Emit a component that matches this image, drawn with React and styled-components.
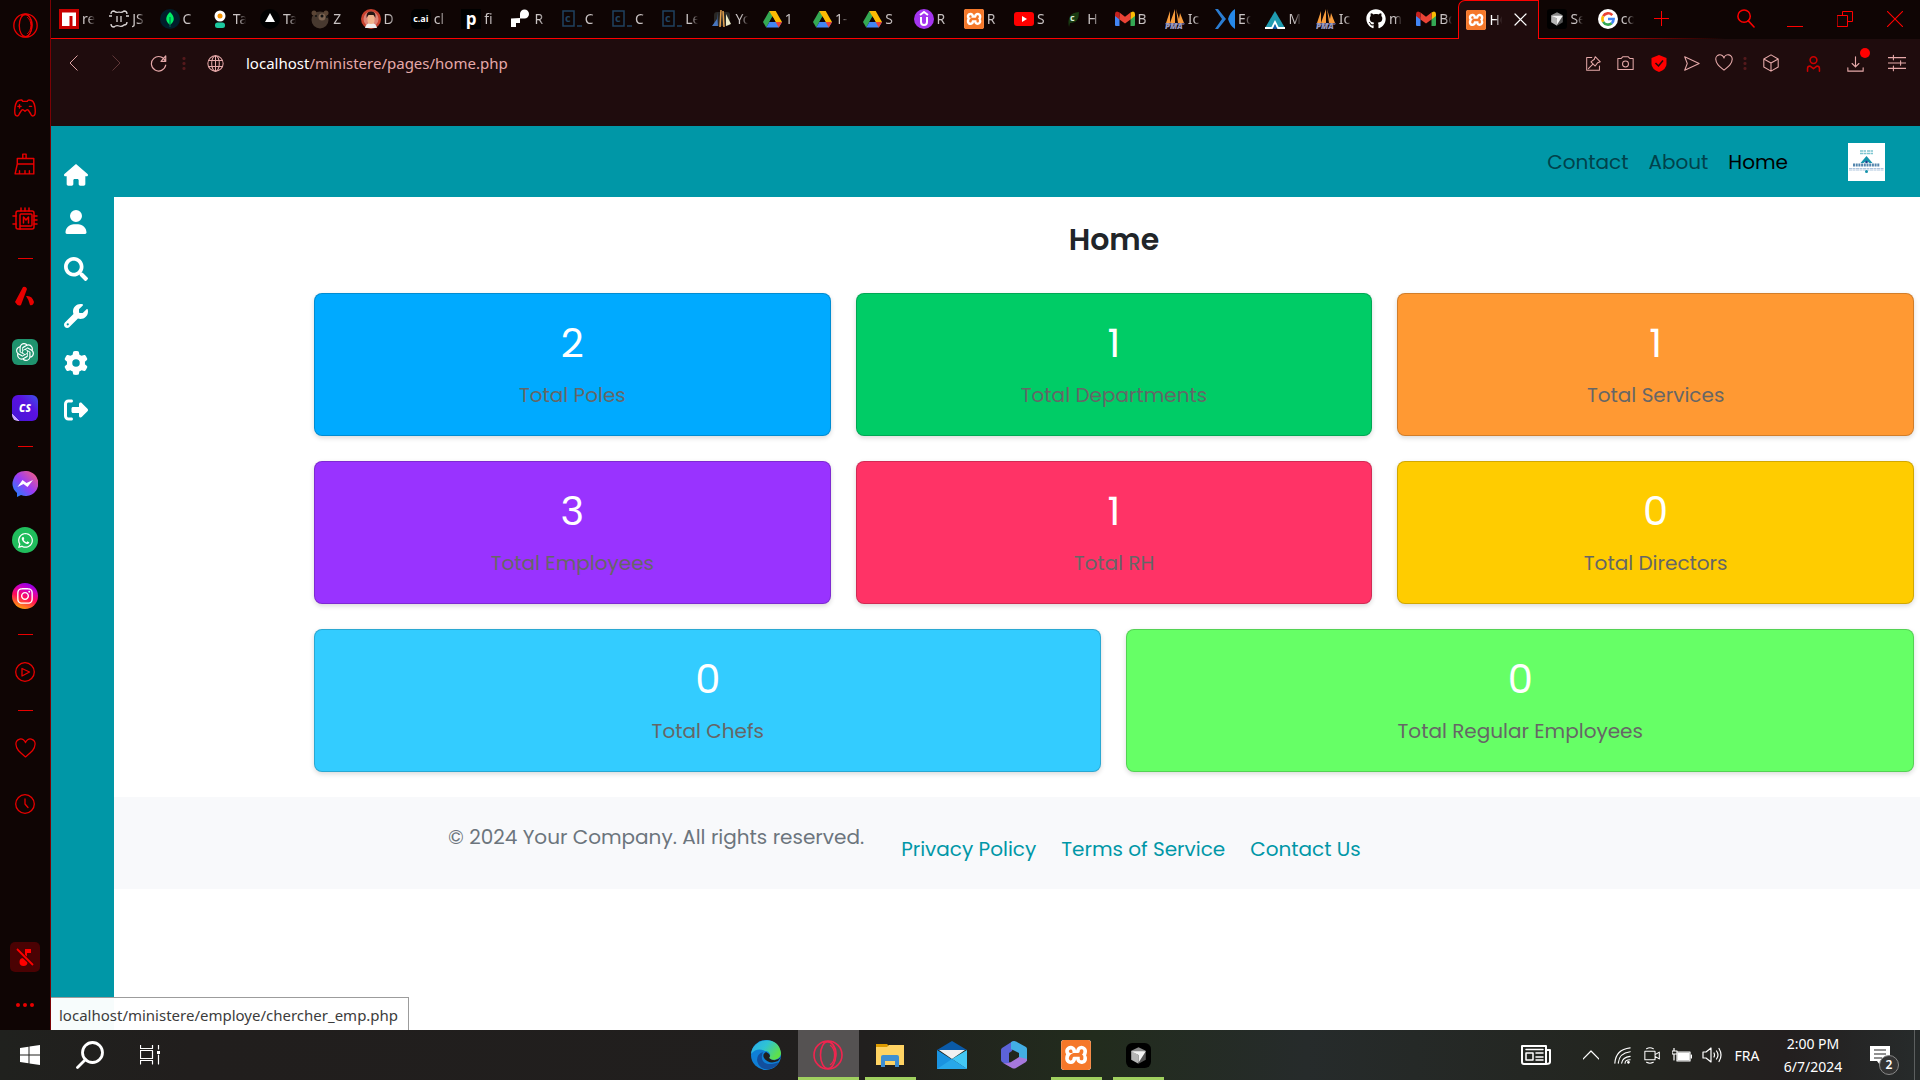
import React from 'react';
import styled, { createGlobalStyle } from 'styled-components';
import {
  FaHouse, FaUser, FaWrench, FaGear, FaRightFromBracket,
  FaWhatsapp, FaInstagram, FaGithub,
} from 'react-icons/fa6';
import { FaSearch } from 'react-icons/fa';
import { SiXampp, SiOpenai } from 'react-icons/si';

const RED = '#ff0000';
const RAIL = '#e80000';
const TEAL = '#0097a7';
const PINK = '#e6a9a9';

const GlobalStyle = createGlobalStyle`
  * { box-sizing: border-box; }
  body { margin: 0; background: #fff; }
  button { border: 0; padding: 0; background: none; color: inherit; font: inherit; cursor: pointer; }
  a { text-decoration: none; color: inherit; }
  svg { display: block; }
  h1, p { margin: 0; }
`;

const Screen = styled.div`
  display: flex;
  flex-direction: column;
  min-height: 100vh;
  font-family: "Noto Sans", "Open Sans", sans-serif;
`;
const Browser = styled.div`display: flex; flex: 1;`;

const Rail = styled.aside`
  display: flex;
  flex-direction: column;
  align-items: center;
  width: 51px;
  flex: none;
  background: #0f0504;
  color: ${RAIL};
  border-right: 1px solid #7a0205;
`;
const RailButton = styled.button`
  display: grid;
  place-items: center;
  width: 50px;
  height: ${(p) => p.$h || 56}px;
`;
const RailRule = styled.hr`
  width: 15px;
  height: 1px;
  margin: 10px 0 9px;
  border: 0;
  background: ${RAIL};
`;
const RailGap = styled.div`flex: ${(p) => (p.$grow ? 1 : 'none')}; height: 30px;`;
const Muted = styled.span`
  display: grid;
  place-items: center;
  width: 30px;
  height: 30px;
  border-radius: 5px;
  background: #4a0203;
`;
const AppBadge = styled.span`
  display: grid;
  place-items: center;
  width: 26px;
  height: 26px;
  border-radius: ${(p) => (p.$round ? '13px' : '6px')};
  background: ${(p) => p.$bg};
  color: #fff;
  font: italic 800 10px "Open Sans", sans-serif;
`;

const Window = styled.div`display: flex; flex-direction: column; flex: 1; min-width: 0;`;

const TabBar = styled.header`
  display: flex;
  height: 39px;
  background:
    linear-gradient(90deg, ${RED} calc(100% - 355px), #0f0504 calc(100% - 195px)) bottom / 100% 1px no-repeat,
    #0f0504;
`;
const Tabs = styled.div`display: flex; flex: 1; min-width: 0;`;
const Tab = styled.button`
  display: flex;
  align-items: center;
  gap: 3px;
  flex: ${(p) => (p.$active ? 'none' : '1 1 0')};
  width: ${(p) => (p.$active ? '81px' : 'auto')};
  min-width: 0;
  height: 39px;
  padding: 0 0 1px ${(p) => (p.$active ? 7 : 8)}px;
  color: ${(p) => (p.$active ? '#fff' : '#c9c3c3')};
  background: ${(p) => (p.$active ? '#1f0c0d' : 'none')};
  border: solid ${RED};
  border-width: ${(p) => (p.$active ? '1px 1px 0' : '0')};
  border-radius: ${(p) => (p.$active ? '7px 0 0 0' : '0')};
`;
const TabTitle = styled.span`
  flex: none;
  white-space: nowrap;
  font-size: 14px;
  line-height: 20px;
  mask-image: linear-gradient(90deg, #000 6px, transparent 13px);
`;
const Favicon = styled.span`
  display: grid;
  place-items: center;
  flex: none;
  width: ${(p) => p.$box || 20}px;
  height: ${(p) => p.$box || 20}px;
  border-radius: ${(p) => p.$r || 0}px;
  background: ${(p) => p.$bg || 'none'};
  color: ${(p) => p.$fg || '#fff'};
  font: 700 ${(p) => p.$size || 12}px/20px "Open Sans", sans-serif;
`;
const WindowControls = styled.div`
  display: flex;
  width: 280px;
  flex: none;
  color: ${RED};
  justify-content: space-between;
`;
const Controls = styled.div`display: flex;`;
const ControlButton = styled.button`display: grid; place-items: center; width: ${(p) => p.$w || 50}px; height: 37px;`;

const Toolbar = styled.div`
  background: #1f0c0d;
  color: ${PINK};
  padding-bottom: 39px;
`;
const AddressRow = styled.div`display: flex; align-items: center; height: 48px; padding: 0 2px;`;
const ToolButton = styled.button`
  display: grid;
  place-items: center;
  position: relative;
  width: ${(p) => p.$w || 42}px;
  height: 42px;
  color: ${(p) => p.$fg || 'inherit'};
`;
const Dots = styled.span`
  width: 10px;
  height: 13px;
  background: radial-gradient(circle, #55191b 1px, transparent 2px) center / 10px 5px;
`;
const UrlBox = styled.a`
  flex: 1;
  padding-left: 5px;
  font-size: 15px;
  line-height: 24px;
  b { color: #fff; font-weight: 400; }
`;
const Alert = styled.span`
  position: absolute;
  top: 6px;
  right: 6px;
  width: 10px;
  height: 10px;
  border-radius: 5px;
  background: ${RED};
`;

const Page = styled.div`
  position: relative;
  display: flex;
  flex: 1;
  background: #fff;
  font-family: Poppins, Inter, sans-serif;
`;
const SideNav = styled.nav`
  display: flex;
  flex-direction: column;
  flex: none;
  width: 63px;
  padding-top: 25px;
  background: ${TEAL};
  color: #fff;
`;
const SideLink = styled.a`
  display: grid;
  place-items: center;
  width: 50px;
  height: 47px;
  svg { width: auto; height: 24px; }
`;
const Content = styled.div`flex: 1; min-width: 0;`;
const TopNav = styled.nav`
  display: flex;
  align-items: center;
  justify-content: flex-end;
  gap: 20px;
  height: 71px;
  padding-right: 35px;
  background: ${TEAL};
`;
const TopLink = styled.a`
  font-size: 20px;
  line-height: 30px;
  color: ${(p) => (p.$active ? '#000' : '#00424b')};
`;
const Logo = styled.a`margin-left: 40px; background: #fff;`;

const Main = styled.main`padding: 25px 6px 25px 200px;`;
const Title = styled.h1`
  margin-bottom: 35px;
  text-align: center;
  font-size: 30px;
  line-height: 36px;
  font-weight: 600;
  color: #212529;
`;
const Cards = styled.section`display: grid; grid-template-columns: repeat(6, 1fr); gap: 25px;`;
const Card = styled.article`
  grid-column: span ${(p) => p.$span};
  padding: 25px;
  text-align: center;
  background: ${(p) => p.$bg};
  border: 1px solid rgba(0, 0, 0, 0.175);
  border-radius: 8px;
  box-shadow: 0 2px 5px rgba(0, 0, 0, 0.15);
`;
const Count = styled.p`margin-bottom: 13px; font-size: 40px; line-height: 48px; color: #fff;`;
const CardLabel = styled.p`font-size: 20px; line-height: 30px; color: #666;`;

const Footer = styled.footer`
  display: flex;
  gap: 37px;
  padding: 25px 0 25px 334px;
  background: #f8f9fb;
  font-size: 20px;
  line-height: 30px;
  color: #6c757d;
`;
const FooterLinks = styled.div`display: flex; gap: 25px; padding-top: 12px; color: ${TEAL};`;

const Status = styled.div`
  position: absolute;
  left: 0;
  bottom: 0;
  padding: 3px 10px 1px 8px;
  border: 1px solid #9c9c9c;
  border-width: 1px 1px 0 0;
  background: rgba(255, 255, 255, 0.97);
  color: #3c3c3c;
  font: 15px/28px "Noto Sans", "Open Sans", sans-serif;
`;

const Taskbar = styled.footer`
  display: grid;
  grid-template-columns: 1fr auto 1fr;
  height: 50px;
  background: linear-gradient(90deg, #20211e 0, #211e1d 10%, #211f1e 45%, #222c1d 57%, #262b2b 68%, #23251f 85%, #231f1f 93%, #272b2b 100%);
  color: #fff;
`;
const TaskGroup = styled.div`display: flex; align-items: center; justify-content: ${(p) => (p.$end ? 'flex-end' : 'flex-start')};`;
const TaskButton = styled.button`
  display: grid;
  place-items: center;
  width: ${(p) => p.$w || 60}px;
  height: 50px;
  background:
    linear-gradient(${(p) => (p.$running ? '#a0d05f, #a0d05f' : 'transparent, transparent')}) bottom / ${(p) => (p.$active ? '100%' : '51px')} 3px no-repeat,
    ${(p) => (p.$active ? '#555252' : 'transparent')};
`;
const AppGroup = styled.div`display: flex; gap: 1px; margin-right: 16px;`;
const Clock = styled.time`
  width: 92px;
  text-align: center;
  font-size: 14px;
  line-height: 23px;
  white-space: pre-line;
`;
const Language = styled.button`width: 40px; font-size: 14px;`;
const Notices = styled.button`
  position: relative;
  width: 56px;
  height: 50px;
  margin-right: 5px;
  padding-left: 11px;
  border-right: 1px solid #5c5f5f;
`;
const NoticeCount = styled.span`
  position: absolute;
  right: 15px;
  bottom: 5px;
  width: 20px;
  height: 20px;
  border: 1px solid #888;
  border-radius: 10px;
  background: #343434;
  font-size: 12px;
  line-height: 18px;
  font-weight: 600;
`;

const Line = ({ w = 20, h, vb = '0 0 20 20', sw = 1.2, children }) => (
  <svg width={w} height={h || w} viewBox={vb} fill="none" stroke="currentColor" strokeWidth={sw} strokeLinejoin="round" strokeLinecap="round" aria-hidden="true">{children}</svg>
);

const OperaIcon = ({ size = 26, color = 'currentColor' }) => (
  <svg width={size} height={size} viewBox="0 0 30 30" fill="none" stroke={color} strokeWidth="1.6" aria-hidden="true">
    <circle cx="15" cy="15" r="14" />
    <ellipse cx="15" cy="15" rx="7.5" ry="13.5" />
    <path d="M10 3C19-1 24 8 23 16c-.5 6-3 10-6 12M17 5c6 4 6 16 0 20" strokeWidth="1.2" />
  </svg>
);
const Gmail = () => (
  <svg width="20" height="16" viewBox="0 0 20 16" aria-hidden="true">
    <path d="M0 3v11q0 1 1 1h3.500V6z" fill="#4285f4" /><path d="M20 3v11q0 1-1 1h-3.500V6z" fill="#34a853" />
    <path d="M15.500 1.500 18 .5q2 0 2 2.500v2l-4.500 3.500z" fill="#fbbc04" />
    <path d="M4.500 1.500 10 5.800l5.500-4.300v7L10 12.500 4.500 8.500z" fill="#ea4335" /><path d="M4.500 1.500 2 .5Q0 .5 0 3v2l4.500 3.500z" fill="#c5221f" />
  </svg>
);
const Drive = () => (
  <svg width="19" height="17" viewBox="0 0 19 17" aria-hidden="true">
    <path d="M6.300 0h6.400l-9.500 16.500L0 11z" fill="#34a853" /><path d="M6.300 0h6.400L19 11h-6.400z" fill="#fbbc04" />
    <path d="M3.200 16.500 6.400 11H19l-3.200 5.500z" fill="#4285f4" /><path d="M12.600 11H19l-3.200 5.500z" fill="#ea4335" />
    <path d="M9.500 5.600 12.600 11H6.400z" fill="#0f0504" />
  </svg>
);
const Xampp = ({ size = 20 }) => (
  <Favicon $bg="#fff" $fg="#f5782a" $r={3} $box={size}><SiXampp size={size} /></Favicon>
);
const Cube = ({ size = 20, pad = 4 }) => (
  <svg width={size} height={size} viewBox="0 0 24 24" aria-hidden="true">
    <rect width="24" height="24" rx={pad} fill="#000" />
    <path d="m12 4 7 3.500-7 3.500-7-3.500z" fill="#888" /><path d="m5 7.500 7 4V20l-7-4z" fill="#b5b5b5" /><path d="m12 11 7-3.500V16l-7 4z" fill="#555" />
    <path d="M5 8h14l-7 11v-7.500z" fill="#f3f3f3" />
  </svg>
);
const Sails = () => (
  <svg width="20" height="20" viewBox="0 0 20 20" aria-hidden="true">
    <path d="M5 2 1 14h4zM10 0 5 14h5zM11 0l2 14h6L15 4l-1 6z" fill="#f89c3c" />
    <path d="M0 14h20l-1 2H1z" fill="#53527a" />
    <text x="0" y="20" fontSize="8" fontWeight="800" fontStyle="italic" fontFamily="Open Sans, sans-serif" fill="#9a9ac0">PMA</text>
  </svg>
);
const Arrowhead = () => (
  <svg width="20" height="20" viewBox="0 0 20 20" aria-hidden="true">
    <path d="M10 2 20 19H0z" fill="#1f9bb0" /><path d="M0 19h7l3-6 3 6h7" stroke="#fff" strokeWidth="1.800" fill="none" /><path d="m10 15 2 5H8z" fill="#1558a8" />
  </svg>
);
const Draw = ({ children }) => <svg width="20" height="20" viewBox="0 0 20 20" aria-hidden="true">{children}</svg>;

const Npm = () => <Draw><path fill="#c80000" d="M0 0h20v20H0z" /><path fill="#fff" d="M3 3.500h14V17h-3.500V7h-3v10H3z" /></Draw>;
const JsonBox = () => (
  <Draw><path d="M2 5q0-3 3-3 2 2 5 1 3 1 5-1 3 0 3 3M2 15q0 3 3 3 2-2 5-1 3 1 5-1 3 0 3-3M0 7h3M17 7h3M8 7v6M12 7v6" stroke="#d9d4d4" strokeWidth="1.300" fill="none" /></Draw>
);
const Leaf = () => <Draw><circle cx="10" cy="10" r="10" fill="#001e2b" /><path d="M10 3c5 5 5 9 0 13-5-4-5-8 0-13z" fill="#00ed64" /><path d="M10 8v10" stroke="#00684a" /></Draw>;
const Person = () => <Draw><circle cx="10" cy="7" r="5.500" fill="#fff" /><circle cx="10" cy="7" r="2.500" fill="#f59300" /><rect x="5" y="13.500" width="10" height="5.500" rx="2.500" fill="#1bc9a0" /></Draw>;
const Triangle = () => <Draw><circle cx="10" cy="10" r="10" fill="#000" /><path d="m10 4 5 9H5z" fill="#fff" /></Draw>;
const Bear = () => <Draw><circle cx="10" cy="11" r="8.500" fill="#48392f" /><circle cx="4" cy="4" r="2.500" fill="#5b4535" /><circle cx="16" cy="4" r="2.500" fill="#5b4535" /><circle cx="12" cy="8" r="3.500" fill="#7d6553" /><circle cx="12" cy="7" r="1.500" fill="#111" /><circle cx="6" cy="7" r="1" fill="#111" /><circle cx="17" cy="8" r="1" fill="#111" /></Draw>;
const Face = () => <Draw><circle cx="10" cy="10" r="10" fill="#c8422f" /><circle cx="10" cy="10" r="7.500" fill="#fff" opacity=".35" /><path d="M4 19q1-5 6-5t6 5z" fill="#eee" /><rect x="6.500" y="5" width="7" height="10" rx="3.500" fill="#f0b48d" /><path d="M5.500 9Q5 2 10 2.500 15 2 14.500 9l-2-3h-5z" fill="#241511" /></Draw>;
const Render = () => <Draw><path d="M9 9V5a4.500 4.500 0 1 1 4.500 4.500H9v4.500H5V18H0V9.500z" fill="#fff" /></Draw>;
const Codecademy = () => (
  <Draw><rect x="1" y="2" width="11" height="15" fill="none" stroke="#20425f" strokeWidth="1.500" /><path d="M15 17h5" stroke="#20425f" strokeWidth="1.500" /><text x="3" y="13" fontSize="11" fontWeight="700" fontFamily="Open Sans, sans-serif" fill="#20425f">c</text></Draw>
);
const Ship = () => <Draw><rect x="2" y="3" width="16" height="14" rx="3" fill="#292724" /><path d="M5 3v7l-5 7h6z" fill="#4875bd" /><path d="M9 1 8 18M11 2l1 16" stroke="#e3a04d" strokeWidth="1.500" /><path d="m14 5 5 10-5 2z" fill="#ecebc8" /></Draw>;
const Udemy = () => <Draw><circle cx="10" cy="10" r="10" fill="#a435f0" /><path d="m6 6 4-3 4 3M7 8v5q0 3 3 3t3-3V8" fill="none" stroke="#fff" strokeWidth="2" /></Draw>;
const YouTube = () => <Draw><rect y="3" width="20" height="14" rx="3" fill="red" /><path d="m8 7 5 3-5 3z" fill="#fff" /></Draw>;
const Plant = () => <Draw><path d="M5 18Q2 4 15 3q0 12-9 11" fill="#193c12" /><text x="6" y="12" fontSize="9" fontWeight="700" fontFamily="Open Sans, sans-serif" fill="#dff0d8">c</text></Draw>;
const Edx = () => <Draw><path d="M0 0h3l8 10-8 10H0l7-10z" fill="#2b7dd2" /><path d="M20 0v20q-5-3-7-10 2-7 7-10z" fill="#2688e8" /></Draw>;
const Google = () => (
  <Draw><circle cx="10" cy="10" r="10" fill="#fff" />
    <g fill="none" strokeWidth="2.600"><path d="M14.300 6.200A5.600 5.600 0 0 0 5.200 7.200" stroke="#ea4335" /><path d="M5.200 7.200a5.600 5.600 0 0 0 0 5.600" stroke="#fbbc04" /><path d="M5.200 12.800a5.600 5.600 0 0 0 8.500 1.400" stroke="#34a853" /><path d="M13.700 14.200Q15.600 12.500 15.600 10H10" stroke="#4285f4" /></g>
  </Draw>
);

const TABS = [
  [<Npm />, 're'], [<JsonBox />, 'JS'], [<Leaf />, 'C'], [<Person />, 'Ta'], [<Triangle />, 'Ta'], [<Bear />, 'Z'], [<Face />, 'D'],
  [<Favicon $bg="#000" $r={5} $size={9}>c.ai</Favicon>, 'cl'], [<Favicon $bg="#000" $size={17}>p</Favicon>, 'fi'], [<Render />, 'R'],
  [<Codecademy />, 'C'], [<Codecademy />, 'C'], [<Codecademy />, 'Le'], [<Ship />, 'Yo'], [<Drive />, '1'], [<Drive />, '1-'], [<Drive />, 'S'],
  [<Udemy />, 'R'], [<Xampp />, 'R'], [<YouTube />, 'S'], [<Plant />, 'H'], [<Gmail />, 'B'], [<Sails />, 'Ic'], [<Edx />, 'Ed'],
  [<Arrowhead />, 'M'], [<Sails />, 'Ic'], [<FaGithub size={20} color="#fff" />, 'm'], [<Gmail />, 'Bo'],
];

const SIDE = [
  ['Home', FaHouse], ['Profile', FaUser], ['Search', FaSearch], ['Tools', FaWrench], ['Settings', FaGear], ['Log out', FaRightFromBracket],
];

const CARDS = [
  ['2', 'Total Poles', '#00aaff', 2], ['1', 'Total Departments', '#00cc66', 2], ['1', 'Total Services', '#ff9933', 2],
  ['3', 'Total Employees', '#9933ff', 2], ['1', 'Total RH', '#ff3366', 2], ['0', 'Total Directors', '#ffcc00', 2],
  ['0', 'Total Chefs', '#33ccff', 3], ['0', 'Total Regular Employees', '#66ff66', 3],
];

const Heart = ({ w = 20 }) => <Line w={w}><path d="M10 18C4 13 1 10.500 1 6.500A4.500 4.500 0 0 1 10 4.500 4.500 4.500 0 0 1 19 6.500C19 10.500 16 13 10 18z" /></Line>;

function OperaRail() {
  return (
    <Rail aria-label="Browser sidebar">
      <RailButton $h={50} aria-label="Opera menu"><OperaIcon size={25} /></RailButton>
      <RailGap />
      <RailButton aria-label="GX corner"><Line w={22} sw={1.3}><path d="M5 3q2-1 3 1h4q1-2 3-1 3 0 4 6 1 7-1 8-2 1-3-2l-2-3q-1-1-3 1-2-2-3-1l-2 3q-1 3-3 2-2-1-1-8 1-6 4-6zM5 7v3M3.500 8.500h3M14 8.500h2" /></Line></RailButton>
      <RailButton aria-label="Cleaner"><Line w={22} sw={1.3}><path d="M8 5V1h3v4M3 5h15v5H3zM3 10 1 19h17V10M5 19v-3M10 19v-3M14 19v-3" /></Line></RailButton>
      <RailButton aria-label="GX control"><Line w={26} vb="0 0 26 26" sw={1.5}><rect x="4" y="4" width="18" height="18" rx="2" /><rect x="8" y="7" width="12" height="12" rx="1" /><path d="M11.500 16v-6l2.500 3 2.500-3v6M9 4V1M13 4V1M17 4V1M22 9h3M22 13h3M22 17h3M4 9H1M4 17H1M8 19v3" /></Line></RailButton>
      <RailRule />
      <RailButton aria-label="Aria"><svg width="20" height="20" viewBox="0 0 20 20" fill="currentColor"><path d="M8 1q3-1 4 2L6 19q-3 2-6-3zM11 10q6-1 8 6-1 4-4 3-1-5-4-9z" /></svg></RailButton>
      <RailButton aria-label="ChatGPT"><AppBadge $bg="#1f936e"><SiOpenai size={18} /></AppBadge></RailButton>
      <RailButton aria-label="ChatSonic"><AppBadge $bg="linear-gradient(45deg,#c9a6ff 14%,#4a16d8 15%,#5a10e0 60%,#3d55e8)">CS</AppBadge></RailButton>
      <RailRule />
      <RailButton aria-label="Messenger">
        <svg width="26" height="26" viewBox="0 0 26 26">
          <defs><linearGradient id="msg" x1="0" y1="1" x2="1" y2="0"><stop offset="0" stopColor="#0a8cff" /><stop offset=".5" stopColor="#9b3bf5" /><stop offset="1" stopColor="#ff6470" /></linearGradient></defs>
          <path d="M13 0a12.500 12.500 0 1 1-4 24l-4 2v-4A12.500 12.500 0 0 1 13 0z" fill="url(#msg)" />
          <path d="m5.500 16 5-7 4 3 6.500-3-5.500 7-4-3z" fill="#fff" />
        </svg>
      </RailButton>
      <RailButton aria-label="WhatsApp"><AppBadge $round $bg="#20bd5c"><FaWhatsapp size={17} /></AppBadge></RailButton>
      <RailButton aria-label="Instagram"><AppBadge $round $bg="linear-gradient(20deg,#ffb400 5%,#ff0a5a 45%,#d000c0 70%,#6a00ff)"><FaInstagram size={18} /></AppBadge></RailButton>
      <RailRule />
      <RailButton aria-label="Player"><Line sw={1.3}><circle cx="10" cy="10" r="9.300" /><path d="M7 6.500 14.500 10 7 14z" /></Line></RailButton>
      <RailRule />
      <RailButton aria-label="Pinboards"><Heart w={21} /></RailButton>
      <RailButton aria-label="History"><Line sw={1.3}><circle cx="10" cy="10" r="9.300" /><path d="M10 5v5l3 3.500" /></Line></RailButton>
      <RailGap $grow />
      <RailButton $h={46} aria-label="Background music"><Muted><svg width="18" height="18" viewBox="0 0 18 18" fill={RED}><path d="M9 1h6v4h-4v9H9z" /><circle cx="7.500" cy="14" r="4" /><path d="m1 2 16 15" stroke="#4a0203" strokeWidth="4" /><path d="m1 1 16 16" stroke={RED} strokeWidth="1.800" /></svg></Muted></RailButton>
      <RailButton $h={50} aria-label="Sidebar setup"><svg width="18" height="4" viewBox="0 0 18 4" fill="currentColor"><circle cx="2" cy="2" r="2" /><circle cx="9" cy="2" r="2" /><circle cx="16" cy="2" r="2" /></svg></RailButton>
    </Rail>
  );
}

function BrowserChrome() {
  return (
    <>
      <TabBar>
        <Tabs>
          {TABS.map(([icon, title], i) => <Tab key={i}>{icon}<TabTitle>{title}</TabTitle></Tab>)}
          <Tab $active><Xampp /><TabTitle>HO</TabTitle><Line w={13} vb="0 0 13 13"><path d="m1 1 11 11M12 1 1 12" /></Line></Tab>
          <Tab><Cube /><TabTitle>Se</TabTitle></Tab>
          <Tab><Google /><TabTitle>co</TabTitle></Tab>
        </Tabs>
        <WindowControls>
          <ControlButton $w={42} aria-label="New tab"><Line w={15} vb="0 0 15 15" sw={1}><path d="M7.500 0v15M0 7.500h15" /></Line></ControlButton>
          <Controls>
            <ControlButton aria-label="Search tabs"><Line w={19} sw={1.6}><circle cx="8.500" cy="7.500" r="6.500" /><path d="m13 12.500 6 6.500" /></Line></ControlButton>
            <ControlButton aria-label="Minimize"><Line w={16} vb="0 0 16 16" sw={1}><path d="M0 15.500h16" /></Line></ControlButton>
            <ControlButton aria-label="Restore"><Line w={16} vb="0 0 16 16" sw={1}><path d="M.5 4.500h10v11H.5zM5.500 4.500v-4h10v10h-5" /></Line></ControlButton>
            <ControlButton aria-label="Close"><Line w={16} vb="0 0 16 16" sw={1.1}><path d="m0 0 16 16M16 0 0 16" /></Line></ControlButton>
          </Controls>
        </WindowControls>
      </TabBar>
      <Toolbar>
        <AddressRow>
          <ToolButton aria-label="Back"><Line w={16}><path d="M14 1 5 10l9 9" /></Line></ToolButton>
          <ToolButton $fg="#62393b" aria-label="Forward"><Line w={16}><path d="m6 1 9 9-9 9" /></Line></ToolButton>
          <ToolButton aria-label="Reload"><Line w={17} sw={1.4}><path d="M18 7A8.500 8.500 0 1 0 18.500 12M18.500 1v6.500H13z" /></Line></ToolButton>
          <Dots />
          <ToolButton $w={52} aria-label="Site information"><Line w={17}><circle cx="10" cy="10" r="9" /><ellipse cx="10" cy="10" rx="4.500" ry="9" /><path d="M10 1v18M2 6.500h16M2 13.500h16" /></Line></ToolButton>
          <UrlBox href="#"><b>localhost</b>/ministere/pages/home.php</UrlBox>
          <ToolButton $w={32} aria-label="Pin"><Line w={17}><path d="M8 3H2v15h15v-5M12 2l6 6-3 1-3 4-5-5 4-3zM9 11l-5 5" /></Line></ToolButton>
          <ToolButton $w={33} aria-label="Snapshot"><Line w={17}><path d="M1 4h4l2-2h6l2 2h4v13H1z" /><circle cx="10" cy="10.500" r="3.500" /></Line></ToolButton>
          <ToolButton $w={33} aria-label="Shield"><svg width="16" height="17" viewBox="0 0 16 17"><path d="m8 0 7.500 3v6q0 5-7.500 8Q.5 14 .5 9V3z" fill={RED} /><path d="m4.500 8 3 3L12 5.500" fill="none" stroke="#1f0c0d" strokeWidth="1.500" /></svg></ToolButton>
          <ToolButton $w={33} aria-label="Send"><Line w={17}><path d="m2 2 17 8-17 8 3-8z" /></Line></ToolButton>
          <ToolButton $w={32} aria-label="Favourite"><Heart w={18} /></ToolButton>
          <Dots />
          <ToolButton aria-label="Extensions"><Line w={18}><path d="m10 1 8 4.500v9L10 19l-8-4.500v-9zM2 5.500l8 4.500 8-4.500M10 10v9" /></Line></ToolButton>
          <ToolButton $fg="#d00000" aria-label="Account"><Line w={17} sw={1.8}><circle cx="10" cy="6" r="4" /><path d="M3 19v-3q0-3 3-3l4 3 4-3q3 0 3 3v3" /></Line></ToolButton>
          <ToolButton aria-label="Downloads"><Line w={17} sw={1.3}><path d="M10 2v12M6 10l4 4 4-4M1 15v4h18v-4" /></Line><Alert /></ToolButton>
          <ToolButton aria-label="Easy setup"><Line w={18}><path d="M0 4h20M0 10h20M0 16h20M6 1.500v5M14 7.500v5M6 13.500v5" /></Line></ToolButton>
        </AddressRow>
      </Toolbar>
    </>
  );
}

function Dashboard() {
  return (
    <Page>
      <SideNav aria-label="Sections">
        {SIDE.map(([name, Icon]) => <SideLink key={name} href="#" aria-label={name}><Icon size={24} /></SideLink>)}
      </SideNav>
      <Content>
        <TopNav>
          <TopLink href="#">Contact</TopLink>
          <TopLink href="#">About</TopLink>
          <TopLink href="#" $active>Home</TopLink>
          <Logo href="#" aria-label="Ministry">
            <svg width="37" height="38" viewBox="0 0 37 38">
              <path d="M12 8h6m1 0h6M12 10.500h13" stroke="#7cc5d0" strokeWidth="1.400" strokeDasharray="3 .5" />
              <path d="m18.500 13 6 7h-3l-3-2-3 2h-3z" fill="#1593ab" />
              <path d="M5 22h27" stroke="#5486ad" strokeWidth="3" strokeDasharray="2 .7" /><path d="M1 25.500h35M1 27h35" stroke="#9bb6d4" strokeWidth=".8" strokeDasharray="3 .5" />
              <circle cx="18.500" cy="19" r="1.300" fill="#1d3f8c" /><circle cx="18.500" cy="28.500" r="1.500" fill="#1593ab" />
            </svg>
          </Logo>
        </TopNav>
        <Main>
          <Title>Home</Title>
          <Cards>
            {CARDS.map(([count, label, bg, span]) => (
              <Card key={label} $bg={bg} $span={span}><Count>{count}</Count><CardLabel>{label}</CardLabel></Card>
            ))}
          </Cards>
        </Main>
        <Footer>
          <p>© 2024 Your Company. All rights reserved.</p>
          <FooterLinks><a href="#">Privacy Policy</a><a href="#">Terms of Service</a><a href="#">Contact Us</a></FooterLinks>
        </Footer>
      </Content>
      <Status>localhost/ministere/employe/chercher_emp.php</Status>
    </Page>
  );
}

function WindowsTaskbar() {
  return (
    <Taskbar>
      <TaskGroup>
        <TaskButton aria-label="Start"><svg width="20" height="20" viewBox="0 0 20 20" fill="#fff"><path d="m0 3 8.500-1.300v7.800H0zM9.500 1.500 20 0v9.500H9.500zM0 10.500h8.500v7.800L0 17zM9.500 10.500H20V20L9.500 18.500z" /></svg></TaskButton>
        <TaskButton aria-label="Search"><Line w={28} vb="0 0 28 28" sw={2.8}><circle cx="16.500" cy="11.500" r="10" /><path d="m9.500 18.500-8 8" /></Line></TaskButton>
        <TaskButton aria-label="Task view"><Line w={20} sw={1.2}><path d="M.5 0v3.500h12V0M.5 5.500h12v8H.5zM.5 19v-3.500h12V19M18.500 0v4M18.500 10v9" /><path d="M17 6h3v3h-3z" fill="#fff" stroke="none" /></Line></TaskButton>
      </TaskGroup>
      <AppGroup>
        <TaskButton $w={61} aria-label="Edge">
          <svg width="30" height="30" viewBox="0 0 30 30">
            <defs><linearGradient id="e1" x2="1" y2=".5"><stop stopColor="#2aa9ec" /><stop offset=".5" stopColor="#2fc3d4" /><stop offset="1" stopColor="#5ee04a" /></linearGradient></defs>
            <circle cx="15" cy="15" r="15" fill="#0f7fd6" /><path d="M0 14C2-3 28-5 30 13c0 6-8 9-12 5 3-3 0-7-4-7Q6 7 0 14z" fill="url(#e1)" />
            <path d="M12 12c-4 8 2 16 16 10C22 32 8 32 6 20q0-6 6-8z" fill="#124f9e" /><path d="M15 12q-4 2-2 6 5 7 14 3l3-4q-6 6-12 1 3-3-3-6z" fill="#211f1e" />
          </svg>
        </TaskButton>
        <TaskButton $w={61} $running $active aria-label="Opera GX"><OperaIcon size={30} color="#f0254f" /></TaskButton>
        <TaskButton $w={61} $running aria-label="File Explorer">
          <svg width="28" height="24" viewBox="0 0 28 24"><path d="M0 1h11l3 3H0z" fill="#dc9a00" /><path d="M0 4h11l2-2h15v20H0z" fill="#ffd363" /><path d="M5 24V14q0-2 2-2h14q2 0 2 2v10h-4v-6H9v6z" fill="#3f8fd2" /></svg>
        </TaskButton>
        <TaskButton $w={61} aria-label="Mail">
          <svg width="30" height="28" viewBox="0 0 30 28"><path d="M0 9 15 0l15 9z" fill="#0a5aa8" /><path d="M2 9h26L15 18z" fill="#f1f1f1" /><path d="M0 9v19h30z" fill="#1a93e0" /><path d="M30 9v19L15 18z" fill="#43c8f5" /><path d="M0 28 15 18l15 10z" fill="#28a8ea" /></svg>
        </TaskButton>
        <TaskButton $w={61} aria-label="Microsoft 365">
          <svg width="26" height="28" viewBox="0 0 26 28"><path d="M1 7 12 0l2 .5L11 10l-3 2v9l4 3-2 2-9-5q-1-1-1-2V9q0-1 1-2z" fill="#5c63d8" /><path d="m10 1 3-1q1 0 2 .5L25 6q1 1 1 2v12l-8-3v-5l-8-4z" fill="#43aee5" /><path d="M26 18q0 2-1 3l-10 6q-2 1-4 0l-9-5q5 1 8-1l8-5z" fill="#a678dc" /></svg>
        </TaskButton>
        <TaskButton $w={61} $running aria-label="XAMPP"><Xampp size={30} /></TaskButton>
        <TaskButton $w={61} $running aria-label="Cursor"><Cube size={25} pad={6} /></TaskButton>
      </AppGroup>
      <TaskGroup $end>
        <TaskButton $w={78} aria-label="News"><Line w={30} h={20} vb="0 0 30 20" sw={2}><path d="M1 1h24v18H3q-2 0-2-2zM25 5h4v12q0 2-4 2" /><path d="M5 8h7v7H5zM15 8h7M15 12h7M15 15h7M5 4.500h17" strokeWidth="1.500" /></Line></TaskButton>
        <TaskButton $w={32} aria-label="Hidden icons"><Line w={16} h={10} vb="0 0 16 10"><path d="m0 9 8-8 8 8" /></Line></TaskButton>
        <TaskButton $w={30} aria-label="Network"><Line w={17}><path d="M1 19Q2 3 19 1M5 19Q6 7 19 5.500M9 19q1-7 10-8M13 19q0-4 6-4" strokeWidth="1.300" /><circle cx="17" cy="18" r="1" fill="#fff" /></Line></TaskButton>
        <TaskButton $w={30} aria-label="Camera"><Line w={17}><path d="M1 5h12v10H1zM13 9l5-3v8l-5-3M3 2q4-2 8 0M3 18q4 2 8 0" /></Line></TaskButton>
        <TaskButton $w={30} aria-label="Battery"><Line w={20} h={14} vb="0 0 20 14"><path d="M5 4h13v9H5zM19.500 7v3M2 0v3M0 3h5v3H0zM2 6v6" /><path d="M6 5h11v7H6z" fill="#fff" /></Line></TaskButton>
        <TaskButton $w={30} aria-label="Volume"><Line w={20}><path d="M1 7h3l5-4v14l-5-4H1zM12 8q1 2 0 4M14.500 6q3 4 0 8M17 3.500q4 6.500 0 13" /></Line></TaskButton>
        <Language>FRA</Language>
        <Clock>{'2:00 PM\n6/7/2024'}</Clock>
        <Notices aria-label="Notifications"><svg width="20" height="20" viewBox="0 0 20 20"><path d="M0 1h20v15h-7l-3 4-3-4H0z" fill="#fff" /><path d="M4 5h12M4 9h12M4 13h8" stroke="#222" strokeWidth="1.200" /></svg><NoticeCount>2</NoticeCount></Notices>
      </TaskGroup>
    </Taskbar>
  );
}

export default function App() {
  return (
    <Screen>
      <GlobalStyle />
      <Browser>
        <OperaRail />
        <Window>
          <BrowserChrome />
          <Dashboard />
        </Window>
      </Browser>
      <WindowsTaskbar />
    </Screen>
  );
}
